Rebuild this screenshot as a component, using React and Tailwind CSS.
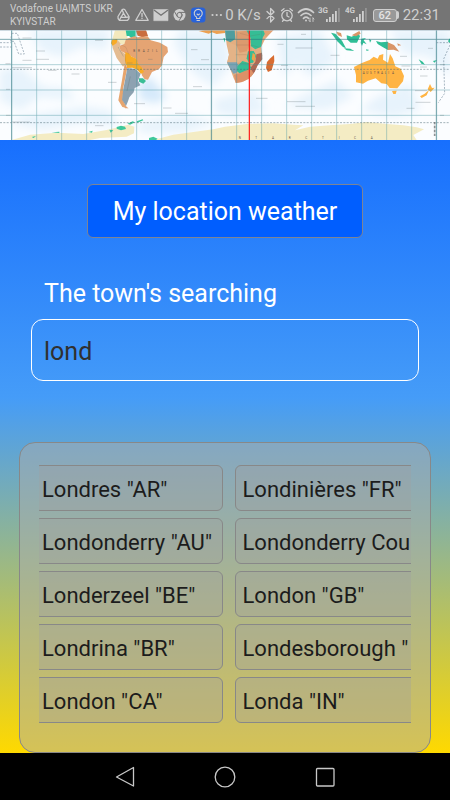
import { useState } from "react";

const towns = [
  'Londres "AR"',
  'Londinières "FR"',
  'Londonderry "AU"',
  "Londonderry Cou",
  'Londerzeel "BE"',
  'London "GB"',
  'Londrina "BR"',
  'Londesborough "',
  'London "CA"',
  'Londa "IN"',
];

function Signal({ label }) {
  return (
    <svg viewBox="0 0 24 20" className="h-5 w-6 shrink-0" fill="#cfcfcf">
      <text x="0" y="8" fontSize="8" fontWeight="700" fontFamily="Roboto" textRendering="geometricPrecision">{label}</text>
      <rect x="8" y="14" width="1.8" height="3" />
      <rect x="11" y="12" width="1.8" height="5" />
      <rect x="14" y="9" width="1.8" height="8" />
      <rect x="17" y="6" width="1.8" height="11" />
      <rect x="20" y="3" width="1.8" height="14" fill="#949494" />
    </svg>
  );
}

function StatusBar() {
  return (
    <header className="flex h-[30px] items-center bg-[#757575] pl-[10px] pr-[10px] font-['Roboto',sans-serif] text-[#cfcfcf]">
      <div className="whitespace-nowrap text-[10px] leading-[13px]">
        <p>Vodafone UA|MTS UKR</p>
        <p>KYIVSTAR</p>
      </div>
      <div className="ml-auto flex items-center">
        <svg viewBox="0 0 108 20" className="h-5 w-[108px] shrink-0" fill="none" stroke="#cfcfcf" strokeWidth="1.3" strokeLinejoin="round" strokeLinecap="round">
          <path d="M7.300 4.500 Q8.500 3.600 9.700 4.500 L14 11.500 Q14.500 13.500 12.600 15.300 H4.400 Q2.500 13.500 3 11.500Z" />
          <path d="M8.500 8 L11 12.300 H6Z" />
          <path d="M4.500 15 L6 12.300 M8.500 8 L7.200 5 M11 12.300 L13.800 12" />
          <path d="M27 4.500 L33.200 15.300 H20.800Z" />
          <path d="M27 8.300 V11.500 M27 13.200 V13.400" />
          <path d="M39 4.500 H53 V15.700 H39Z" fill="#cfcfcf" strokeWidth=".6" />
          <path d="M39.300 5.300 L46 10.300 L52.700 5.300" stroke="#757575" />
          <circle cx="64.500" cy="10" r="6" fill="#cfcfcf" stroke="none" />
          <circle cx="64.500" cy="10" r="2.600" stroke="#757575" strokeWidth="1" />
          <path d="M64.500 7.400 H70 M62.200 11.300 L59.600 6.800 M66.800 11.300 L64 15.800" stroke="#757575" strokeWidth="1" />
          <rect x="76" y="2.500" width="14.500" height="15" rx="3.500" fill="#2862d9" stroke="none" />
          <path d="M81.600 13.500 V12 A4 4 0 1 1 84.900 12 V13.500Z M82 15.500 H84.500 M82 9 L83.200 10 L84.500 9" strokeWidth="1.100" />
          <g fill="#cfcfcf" stroke="none">
            <circle cx="97.500" cy="10" r="1.100" />
            <circle cx="101.700" cy="10" r="1.100" />
            <circle cx="105.900" cy="10" r="1.100" />
          </g>
        </svg>
        <span className="ml-0.5 whitespace-nowrap text-[15px] leading-5">0 K/s</span>
        <svg viewBox="0 0 53 20" className="ml-1 h-5 w-[53px] shrink-0" fill="none" stroke="#cfcfcf" strokeWidth="1.300" strokeLinejoin="round" strokeLinecap="round">
          <path d="M2 6.500 L9 13.300 L5.600 17 V3.500 L9 7 L2 13.600" />
          <circle cx="22" cy="10.600" r="5.200" />
          <path d="M22 7.500 V11 L24 12 M16.500 5.700 L19 3.700 M27.500 5.700 L25 3.700 M18.500 15 L17.500 16.300 M25.500 15 L26.500 16.300" />
          <path d="M33.500 7.500 Q41 .500 48.500 7.500" strokeWidth="1.700" />
          <path d="M36 10.500 Q41 5.700 46 10.500" strokeWidth="1.700" />
          <path d="M38.500 13.300 Q41 11 43.500 13.300" strokeWidth="1.700" />
          <circle cx="41" cy="15.500" r="1" fill="#cfcfcf" stroke="none" />
          <path d="M45 13 V16.500 M44 15.500 L45 16.500 M48 16.500 V13 M49 14 L48 13" strokeWidth=".9" />
        </svg>
        <Signal label="3G" />
        <span className="ml-[3px] flex"><Signal label="4G" /></span>
        <span className="ml-1 flex h-[13px] w-6 items-center justify-center rounded-[3px] border border-[#cfcfcf] bg-[#999999] text-[11px] font-medium leading-[11px] text-[#e4e4e4]">62</span>
        <span className="h-2 w-0.5 rounded-r bg-[#cfcfcf]" />
        <span className="ml-1 text-[15px] leading-5">22:31</span>
      </div>
    </header>
  );
}

function WorldMap() {
  const meridians = Array.from({ length: 18 }, (_, i) => 35 + i * 75);
  return (
    <svg viewBox="0 90 1350 330" className="block h-auto w-full bg-[#fbfdff]" role="img" aria-label="World map">
      <defs>
        <filter id="sea" x="-20%" y="-20%" width="140%" height="140%">
          <feGaussianBlur stdDeviation="12" />
        </filter>
      </defs>
      <g fill="#e7f3fc" filter="url(#sea)">
        <path d="M90 90 L330 90 L320 150 L250 140 L180 170 L120 150Z" />
        <path d="M0 210 L60 200 L130 260 L200 265 L230 300 L120 290 L60 330 L0 300Z" />
        <path d="M415 250 L450 230 L500 290 L470 310 L420 300Z" fill="#d5e9fa" />
        <path d="M250 320 L330 330 L360 380 L240 370 L130 390 L30 370 L60 350Z" />
        <path d="M540 90 L680 90 L690 200 L640 260 L580 220 L520 130Z" />
        <path d="M640 300 L760 270 L800 330 L720 350 L650 340Z" />
        <path d="M830 110 L960 90 L1010 180 L930 230 L890 190 L850 230Z" />
        <path d="M900 290 L1010 240 L1060 290 L980 330 L850 320Z" />
        <path d="M1130 290 L1230 250 L1260 330 L1180 350 L1080 330Z" />
        <path d="M1170 90 L1350 90 L1350 230 L1290 170 L1210 160Z" />
        <path d="M400 370 L560 345 L650 370 L560 395 L430 400Z" />
      </g>

      <g fill="#f4ecc4">
        <path d="M35 420 L90 404 L170 398 L250 402 L320 390 L385 374 L403 380 L402 400 L380 410 L300 414 L270 420Z" />
        <path d="M460 420 L520 404 L580 396 L640 388 L675 380 L740 372 L820 370 L880 374 L910 376 L885 391 L930 380 L1000 375 L1050 372 L1100 366 L1160 372 L1210 376 L1250 382 L1272 388 L1240 405 L1250 420Z" />
      </g>
      <g fill="#3fc89a">
        <path d="M447 414 L460 410 L473 416 L468 420 H447Z" />
        <path d="M350 381 L363 377 L375 380 L378 387 L363 391 L350 386Z" />
        <path d="M382 371 L398 364 L405 367 L390 374Z M410 364 L428 358 L430 361 L412 368Z M328 389 L340 391 L332 398Z M155 397 L178 395 L178 399Z M265 396 L278 392 L276 398Z M95 411 L108 408 L101 414Z" />
      </g>

      <g>
        <path fill="#f3e9bd" d="M345 90 H385 L382 112 L373 134 L352 130 L337 118Z" />
        <path fill="#2ec19a" d="M377 90 H407 V110 L397 117 L387 108 L380 108Z" />
        <path fill="#c96d3f" d="M407 90 H438 L444 108 L428 112 L413 107Z" />
        <path fill="#e5a473" d="M378 117 L403 109 L412 112 L443 109 L452 121 L480 128 L502 141 L504 156 L491 171 L486 196 L477 207 L456 216 L444 239 L434 238 L425 225 L429 208 L415 198 L409 178 L385 164 L361 152 L359 137 L373 132Z" />
        <path fill="#e4bc91" d="M335 124 L350 118 L361 130 L359 149 L379 164 L378 191 L369 200 L350 174 L338 144Z" />
        <path fill="#f8ab25" d="M336 119 L352 118 L350 129 L338 137 L333 130Z M376 156 L388 161 L393 169 L410 177 L415 193 L426 203 L432 216 L423 222 L412 209 L397 203 L381 204 L375 181Z" />
        <path fill="#e7a56e" d="M374 190 L382 203 L375 238 L370 262 L368 299 L381 323 L385 325 L367 321 L355 301 L358 284 L366 240Z" />
        <path fill="#8da2b1" d="M382 204 L405 207 L422 221 L414 242 L421 256 L404 264 L401 277 L388 292 L384 304 L378 318 L366 299 L370 267Z" />
        <path fill="#3bbe96" d="M417 235 L429 235 L438 243 L430 251 L417 245Z" />
        <path fill="#e6a576" d="M372 316 L386 325 L375 325Z" />
      </g>

      <g>
        <path fill="#e3ae80" d="M675 90 H820 L795 118 L783 142 L787 168 L779 184 L767 207 L755 229 L732 244 L708 249 L701 235 L691 208 L681 188 L687 164 L680 134Z" />
        <path fill="#4f9d9e" d="M675 90 H704 L706 117 L691 127 L678 121Z" />
        <path fill="#e4b387" d="M682 126 L711 137 L712 163 L721 180 L709 192 L682 187 L687 164Z" />
        <path fill="#7fa3b4" d="M681 187 L710 187 L717 200 L709 219 L700 221 L691 208Z" />
        <path fill="#dc9a6e" d="M710 96 L752 91 L753 128 L740 154 L719 158 L709 135Z" />
        <path fill="#35bd95" d="M739 90 H801 L788 113 L783 140 L766 148 L753 139 L752 115Z M712 199 L727 183 L747 189 L754 204 L736 216 L719 220 L711 214Z" />
        <path fill="#35bd95" d="M744 154 L761 153 L769 168 L759 188 L747 190 L740 175Z" />
        <path fill="#ad6854" d="M769 163 L786 158 L787 178 L773 196 L764 216 L755 226 L753 202 L766 185Z" />
        <path fill="#eda44a" d="M758 158 L766 164 L764 185 L755 178Z" />
        <path fill="#dd9168" d="M702 224 L719 220 L734 213 L752 207 L761 220 L746 237 L724 247 L707 249Z" />
        <path fill="#e5a374" d="M790 90 H821 L798 112Z" />
        <path fill="#d86c31" d="M822 165 L823 183 L815 211 L804 216 L798 204 L801 186 L811 175Z" />
      </g>

      <g fill="#2fbe96">
        <path d="M993 98 L1006 101 L1026 122 L1038 145 L1029 141 L1012 124Z" />
        <path d="M1040 106 L1055 110 L1075 99 L1080 109 L1071 128 L1052 128 L1041 118Z" />
        <path d="M1032 145 L1051 146 L1063 153 L1040 151Z M1084 116 L1098 114 L1091 121 L1100 133 L1090 128 L1086 138 L1082 129Z M1107 116 L1114 121 L1110 128Z M1128 123 L1143 127 L1164 125 V150 L1149 142 L1133 132Z M1098 148 L1108 150 L1100 153Z" />
        <path d="M1256 178 L1268 185 L1275 194 L1264 191Z M1299 183 L1311 180 L1303 188Z M1348 116 H1350 V130 L1344 124Z M670 115 H675 V128Z" />
      </g>
      <g fill="#d99568">
        <path d="M1163 127 L1182 135 L1198 155 L1181 149 L1163 150Z M1009 95 L1023 99 L1026 111 L1014 106Z M1055 106 L1078 93 L1082 101 L1068 109Z M1192 130 L1204 136 L1194 137Z" />
        <path d="M596 93 L615 90 H675 V99 L650 102 L636 97 L626 101Z" fill="#eca051" />
      </g>
      <g fill="#ffb443">
        <path d="M1062 201 L1084 190 L1099 184 L1109 180 L1121 170 L1133 176 L1138 166 L1150 162 L1149 179 L1164 188 L1170 162 L1178 175 L1186 199 L1202 206 L1212 228 L1209 244 L1192 265 L1169 264 L1160 252 L1144 250 L1127 235 L1104 242 L1089 251 L1068 247 L1068 225Z" />
        <path d="M1176 273 L1190 272 L1187 282 L1180 282Z M1290 252 L1296 264 L1304 263 L1292 276 L1283 268Z M1287 270 L1280 286 L1265 294 L1260 289 L1274 281Z" />
      </g>

      <g fill="none" stroke="#745843" strokeWidth="1" opacity=".45">
        <path d="M360 132 L378 142 L386 163 M389 204 L416 213 M376 163 L377 204 M710 135 H752 L753 154 L742 166 L751 191 M707 164 H740 M713 190 L752 191 L753 210 M720 100 L751 108 L780 103 M753 135 L784 144" />
      </g>
      <g fill="none" stroke="#47949f" strokeWidth="1.700" opacity=".72">
        {meridians.map((x) => <path key={x} d={`M${x} 90 V420`} />)}
        <path d="M0 194 H1350 M0 270 H1350 M0 346 H1350" />
        <path d="M0 118 H1350 M35 90 V420 M634 90 V420 M1309 90 V420" stroke="#29717c" strokeWidth="2.500" />
        <path d="M0 208 H1350 M0 368 H1350" stroke="#42606b" strokeWidth="2" strokeDasharray="6 4" />
        <path d="M35 100 H52 L73 162 H56 L42 124 H32Z M0 128 H32 M0 141 H40 M1309 128 H1350 M1350 135 L1331 177 L1334 280 L1315 308" stroke="#526d82" strokeWidth="2" strokeDasharray="6 4" />
      </g>
      <g stroke="#5c6a70" strokeWidth="2" strokeDasharray="2 1" opacity=".65">
        <path d="M68 114 H95 M37 203 H97 M37 366 H90 M17 191 H31 M18 268 H30 M18 346 H31 M109 153 H135 M68 181 H95 M110 178 H147 M145 211 H170 M215 222 H238 M285 121 H309 M325 247 H350 M402 311 H435 M490 324 H515 M525 340 H563 M285 377 H310 M580 260 H607 M604 179 H628 M574 149 H593 M768 295 H802 M862 305 H917 M887 319 H945 M887 144 H937 M992 166 H1019 M833 133 H851 M843 196 H863 M1247 307 H1292 M1220 325 H1243 M1205 198 H1231 M1260 228 H1282 M1245 272 H1280 M1200 169 H1221 M1320 346 H1332 M1320 194 H1334 M355 142 L370 169 M381 273 L391 229 M444 178 H457 M382 189 H398 M904 103 H918 M1284 145 H1299 M1261 201 H1282" fill="none" />
      </g>
      <g fill="#5e504a" fontFamily="Roboto" fontSize="9">
        <text x="400 414 428 442 456 468" y="157">BRAZIL</text>
        <text x="1088 1099 1110 1121 1132 1143 1154 1165 1176" y="221">AUSTRALIA</text>
        <text x="716 766 816 866 916 966 1016 1062 1112" y="417">NTARCTICA</text>
      </g>
      <path d="M1304 366 V410" stroke="#686d70" strokeWidth="5" strokeDasharray="2 2" />
      <path d="M748 90 V420" stroke="#ff1515" strokeWidth="3.500" />
      <path d="M0 91 H1350" stroke="#a9bdc9" strokeWidth="2" />
    </svg>
  );
}

export default function App() {
  const [query, setQuery] = useState("lond");
  return (
    <div className="flex min-h-screen flex-col bg-black font-['Roboto',sans-serif]">
      <StatusBar />
      <WorldMap />
      <main className="flex flex-1 flex-col bg-linear-to-b/srgb from-[#176ffe] via-[#459cf8] via-42% to-[#ffd900] pt-11">
        <button type="button" className="self-center rounded-md border border-[#7d8494] bg-[#005eff] px-[25px] pt-0.5 text-[25px] leading-[50px] text-white">
          My location weather
        </button>
        <label htmlFor="town" className="mt-10 px-11 text-[25px] leading-8 text-white">The town's searching</label>
        <input
          id="town"
          value={query}
          onChange={(e) => setQuery(e.target.value)}
          className="mx-[31px] mt-[9px] h-[62px] rounded-xl border border-white bg-transparent px-3 pt-0.5 text-[25px] text-[#303030] outline-none"
        />
        <section aria-label="Found towns" className="mx-[19px] mt-[61px] flex-1 rounded-2xl border border-[#888888] bg-[#acacac]/50 px-[19px] pb-[29px] pt-[22px]">
          <div className="overflow-hidden">
            <div className="-ml-[5px] -mr-3 grid grid-cols-2 gap-x-3 gap-y-[7px]">
              {towns.map((town) => (
                <button key={town} type="button" className="h-[46px] min-w-0 overflow-hidden whitespace-nowrap rounded-md border border-[#888888] bg-[#a0a0a0]/35 px-[7px] pt-0.5 text-left text-[22px] text-[#1c1c1c]">
                  {town}
                </button>
              ))}
            </div>
          </div>
        </section>
      </main>
      <nav className="flex h-[47px] items-center justify-center gap-[79px] bg-black">
        <button type="button" aria-label="Back" className="flex">
          <svg viewBox="0 0 20 22" className="h-[22px] w-5" fill="none" stroke="#c8c8c8" strokeWidth="1.300" strokeLinejoin="round"><path d="M18.500 1.500 V20 L1.500 11Z" /></svg>
        </button>
        <button type="button" aria-label="Home" className="flex">
          <svg viewBox="0 0 22 22" className="size-[22px]" fill="none" stroke="#c8c8c8" strokeWidth="1.300"><circle cx="11" cy="11" r="9.800" /></svg>
        </button>
        <button type="button" aria-label="Recent apps" className="flex">
          <svg viewBox="0 0 20 20" className="size-5" fill="none" stroke="#c8c8c8" strokeWidth="1.300"><rect x="1.500" y="1.500" width="17.500" height="17.500" rx="1" /></svg>
        </button>
      </nav>
    </div>
  );
}
